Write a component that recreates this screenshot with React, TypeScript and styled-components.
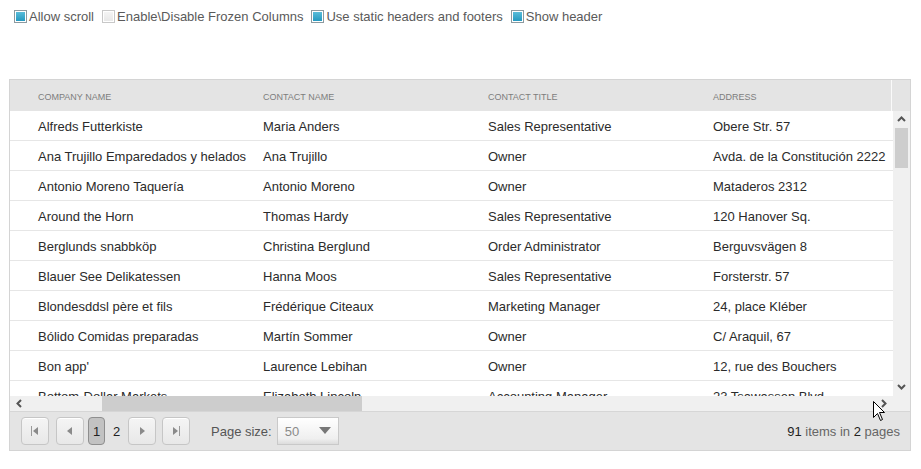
import React, {FC} from 'react';
import styled, {createGlobalStyle} from 'styled-components';

const GlobalStyle = createGlobalStyle`
  html, body {
    margin: 0;
    padding: 0;
    background: #fff;
  }
  body {
    font-family: "Liberation Sans", Arial, sans-serif;
  }
`;

const Page = styled.div`
  position: relative;
  padding: 0 0 0 9px;
  width: 921px;
  height: 469px;
  box-sizing: border-box;
  overflow: hidden;
`;

const Options = styled.div`
  display: flex;
  align-items: center;
  height: 32px;
  padding-left: 5px;
  font-size: 13px;
  color: #5a5a5a;
`;

const Option = styled.label`
  display: flex;
  align-items: center;
  margin-right: 8px;
  white-space: nowrap;
`;

const Check = styled.span<{ $on?: boolean }>`
  display: inline-block;
  box-sizing: border-box;
  width: 13px;
  height: 13px;
  margin-right: 2px;
  border: 1px solid ${(p) => (p.$on ? '#8c9aa0' : '#c8c8c8')};
  box-shadow: inset 0 0 0 1px #fff;
  background: ${(p) =>
    p.$on ? 'linear-gradient(#5fc0dc, #1e95bd)' : 'linear-gradient(#f6f6f6, #e6e6e6)'};
`;

const Grid = styled.div`
  margin-top: 47px;
  width: 902px;
  box-sizing: border-box;
  border: 1px solid #d4d4d4;
  background: #fff;
`;

const Header = styled.div`
  display: flex;
  height: 31px;
  background: #e4e4e4;
`;

const HeaderCells = styled.div`
  display: flex;
  width: 882px;
  padding-left: 14px;
  box-sizing: border-box;
  overflow: hidden;
  border-right: 1px solid #fafafa;
`;

const HeaderCell = styled.div`
  flex: 0 0 225px;
  min-width: 0;
  box-sizing: border-box;
  padding: 3px 0 0 14px;
  line-height: 28px;
  font-size: 9px;
  text-transform: uppercase;
  color: #7d7d7d;
  white-space: nowrap;
`;

const HeaderSpacer = styled.div`
  flex: 1;
`;

const Body = styled.div`
  display: flex;
`;

const BodyMain = styled.div`
  width: 883px;
`;

const Viewport = styled.div`
  height: 285px;
  overflow: hidden;
`;

const Row = styled.div`
  display: flex;
  height: 30px;
  padding-left: 14px;
  box-sizing: border-box;
  border-bottom: 1px solid #e6e6e6;
`;

const Cell = styled.div`
  flex: 0 0 225px;
  min-width: 0;
  box-sizing: border-box;
  padding: 3px 0 0 14px;
  line-height: 26px;
  font-size: 13px;
  color: #2b2b2b;
  white-space: nowrap;
`;

const HScroll = styled.div`
  position: relative;
  display: flex;
  align-items: center;
  justify-content: space-between;
  height: 15px;
  padding: 0 5px 0 5px;
  background: #f0f0f0;
`;

const HThumb = styled.div`
  position: absolute;
  left: 92px;
  top: 0;
  width: 260px;
  height: 15px;
  background: #cdcdcd;
`;

const VScroll = styled.div`
  position: relative;
  display: flex;
  flex-direction: column;
  align-items: center;
  justify-content: space-between;
  width: 17px;
  height: 300px;
  padding: 4px 0 20px;
  box-sizing: border-box;
  background: #f0f0f0;
`;

const VThumb = styled.div`
  position: absolute;
  left: 2px;
  top: 17px;
  width: 13px;
  height: 40px;
  background: #cdcdcd;
`;

const Pager = styled.div`
  display: flex;
  align-items: center;
  height: 38px;
  padding: 0 10px 0 11px;
  border-top: 1px solid #d6d6d6;
  background: #e4e4e4;
  font-size: 13px;
  color: #555;
`;

const PagerButton = styled.div<{ $gap?: number }>`
  display: flex;
  align-items: center;
  justify-content: center;
  box-sizing: border-box;
  width: 28px;
  height: 28px;
  margin-right: ${(p) => p.$gap ?? 7}px;
  border: 1px solid #c6c6c6;
  border-radius: 4px;
  background: linear-gradient(#f5f5f5, #e8e8e8);
  box-shadow: inset 0 1px 0 #fff;
`;

const PageNum = styled.span<{ $current?: boolean }>`
  display: flex;
  align-items: center;
  justify-content: center;
  box-sizing: border-box;
  min-width: 17px;
  height: 28px;
  margin-right: 3px;
  border: 1px solid ${(p) => (p.$current ? '#8e8e8e' : 'transparent')};
  border-radius: 4px;
  background: ${(p) => (p.$current ? '#c2c2c2' : 'transparent')};
  color: #222;
  font-size: 13px;
`;

const PageSizeLabel = styled.span`
  margin-left: 21px;
  margin-right: 5px;
`;

const Dropdown = styled.div`
  display: flex;
  align-items: center;
  justify-content: space-between;
  box-sizing: border-box;
  width: 62px;
  height: 28px;
  padding: 0 7px 0 7px;
  border: 1px solid #c9c9c9;
  background: linear-gradient(#fff 0%, #efefef 80%, #dcdcdc 100%);
  color: #8a8a8a;
`;

const Info = styled.div`
  margin-left: auto;
  color: #666;
  b {
    font-weight: normal;
    color: #222;
  }
`;

const Cursor = styled.svg`
  position: absolute;
  left: 873px;
  top: 401px;
`;

const columns = ['Company Name', 'Contact Name', 'Contact Title', 'Address'];

const rows = [
  ['Alfreds Futterkiste', 'Maria Anders', 'Sales Representative', 'Obere Str. 57'],
  ['Ana Trujillo Emparedados y helados', 'Ana Trujillo', 'Owner', 'Avda. de la Constitución 2222'],
  ['Antonio Moreno Taquería', 'Antonio Moreno', 'Owner', 'Mataderos 2312'],
  ['Around the Horn', 'Thomas Hardy', 'Sales Representative', '120 Hanover Sq.'],
  ['Berglunds snabbköp', 'Christina Berglund', 'Order Administrator', 'Berguvsvägen 8'],
  ['Blauer See Delikatessen', 'Hanna Moos', 'Sales Representative', 'Forsterstr. 57'],
  ['Blondesddsl père et fils', 'Frédérique Citeaux', 'Marketing Manager', '24, place Kléber'],
  ['Bólido Comidas preparadas', 'Martín Sommer', 'Owner', 'C/ Araquil, 67'],
  ["Bon app'", 'Laurence Lebihan', 'Owner', '12, rue des Bouchers'],
  ['Bottom-Dollar Markets', 'Elizabeth Lincoln', 'Accounting Manager', '23 Tsawassen Blvd.'],
];

const Chevron: FC<{ dir: 'up' | 'down' | 'left' | 'right' }> = ({dir}) => {
  const d = {
    up: 'M1 6 L4.5 2.5 L8 6',
    down: 'M1 3 L4.5 6.5 L8 3',
    left: 'M6 1 L2.5 4.5 L6 8',
    right: 'M3 1 L6.5 4.5 L3 8',
  }[dir];
  return (
    <svg width="9" height="9" viewBox="0 0 9 9">
      <path d={d} fill="none" stroke="#555" strokeWidth="2"/>
    </svg>
  );
};

const PagerIcon: FC<{ kind: 'first' | 'prev' | 'next' | 'last' }> = ({kind}) => (
  <svg width="12" height="12" viewBox="0 0 12 12">
    {kind === 'first' && <><rect x="2" y="1" width="1" height="10" fill="#9a9a9a"/><path d="M9 2 L4 6 L9 10 Z" fill="#8a8a8a"/></>}
    {kind === 'prev' && <path d="M8 2 L3 6 L8 10 Z" fill="#8a8a8a"/>}
    {kind === 'next' && <path d="M4 2 L9 6 L4 10 Z" fill="#8a8a8a"/>}
    {kind === 'last' && <><path d="M3 2 L8 6 L3 10 Z" fill="#8a8a8a"/><rect x="9" y="1" width="1" height="10" fill="#9a9a9a"/></>}
  </svg>
);

const App: FC = () => (
  <>
    <GlobalStyle/>
    <Page>
      <Options>
        <Option><Check $on/>Allow scroll</Option>
        <Option><Check/>Enable\Disable Frozen Columns</Option>
        <Option><Check $on/>Use static headers and footers</Option>
        <Option><Check $on/>Show header</Option>
      </Options>

      <Grid>
        <Header>
          <HeaderCells>
            {columns.map((c) => <HeaderCell key={c}>{c}</HeaderCell>)}
          </HeaderCells>
          <HeaderSpacer/>
        </Header>
        <Body>
          <BodyMain>
            <Viewport>
              {rows.map((r) => (
                <Row key={r[0]}>
                  {r.map((v, i) => <Cell key={i}>{v}</Cell>)}
                </Row>
              ))}
            </Viewport>
            <HScroll>
              <Chevron dir="left"/>
              <HThumb/>
              <Chevron dir="right"/>
            </HScroll>
          </BodyMain>
          <VScroll>
            <Chevron dir="up"/>
            <VThumb/>
            <Chevron dir="down"/>
          </VScroll>
        </Body>
        <Pager>
          <PagerButton><PagerIcon kind="first"/></PagerButton>
          <PagerButton $gap={4}><PagerIcon kind="prev"/></PagerButton>
          <PageNum $current>1</PageNum>
          <PageNum>2</PageNum>
          <PagerButton $gap={6}><PagerIcon kind="next"/></PagerButton>
          <PagerButton $gap={0}><PagerIcon kind="last"/></PagerButton>
          <PageSizeLabel>Page size:</PageSizeLabel>
          <Dropdown>
            <span>50</span>
            <svg width="12" height="8" viewBox="0 0 12 8">
              <path d="M0 0 L12 0 L6 7 Z" fill="#777"/>
            </svg>
          </Dropdown>
          <Info><b>91</b> items in <b>2</b> pages</Info>
        </Pager>
      </Grid>

      <Cursor width="13" height="21" viewBox="0 0 13 21">
        <path d="M0.5 0.5 L0.5 16.5 L4.5 12.5 L7.5 19.5 L9.5 18.5 L6.5 11.5 L11.5 11.5 Z"
              fill="#fff" stroke="#000" strokeWidth="1"/>
      </Cursor>
    </Page>
  </>
);

export default App;
